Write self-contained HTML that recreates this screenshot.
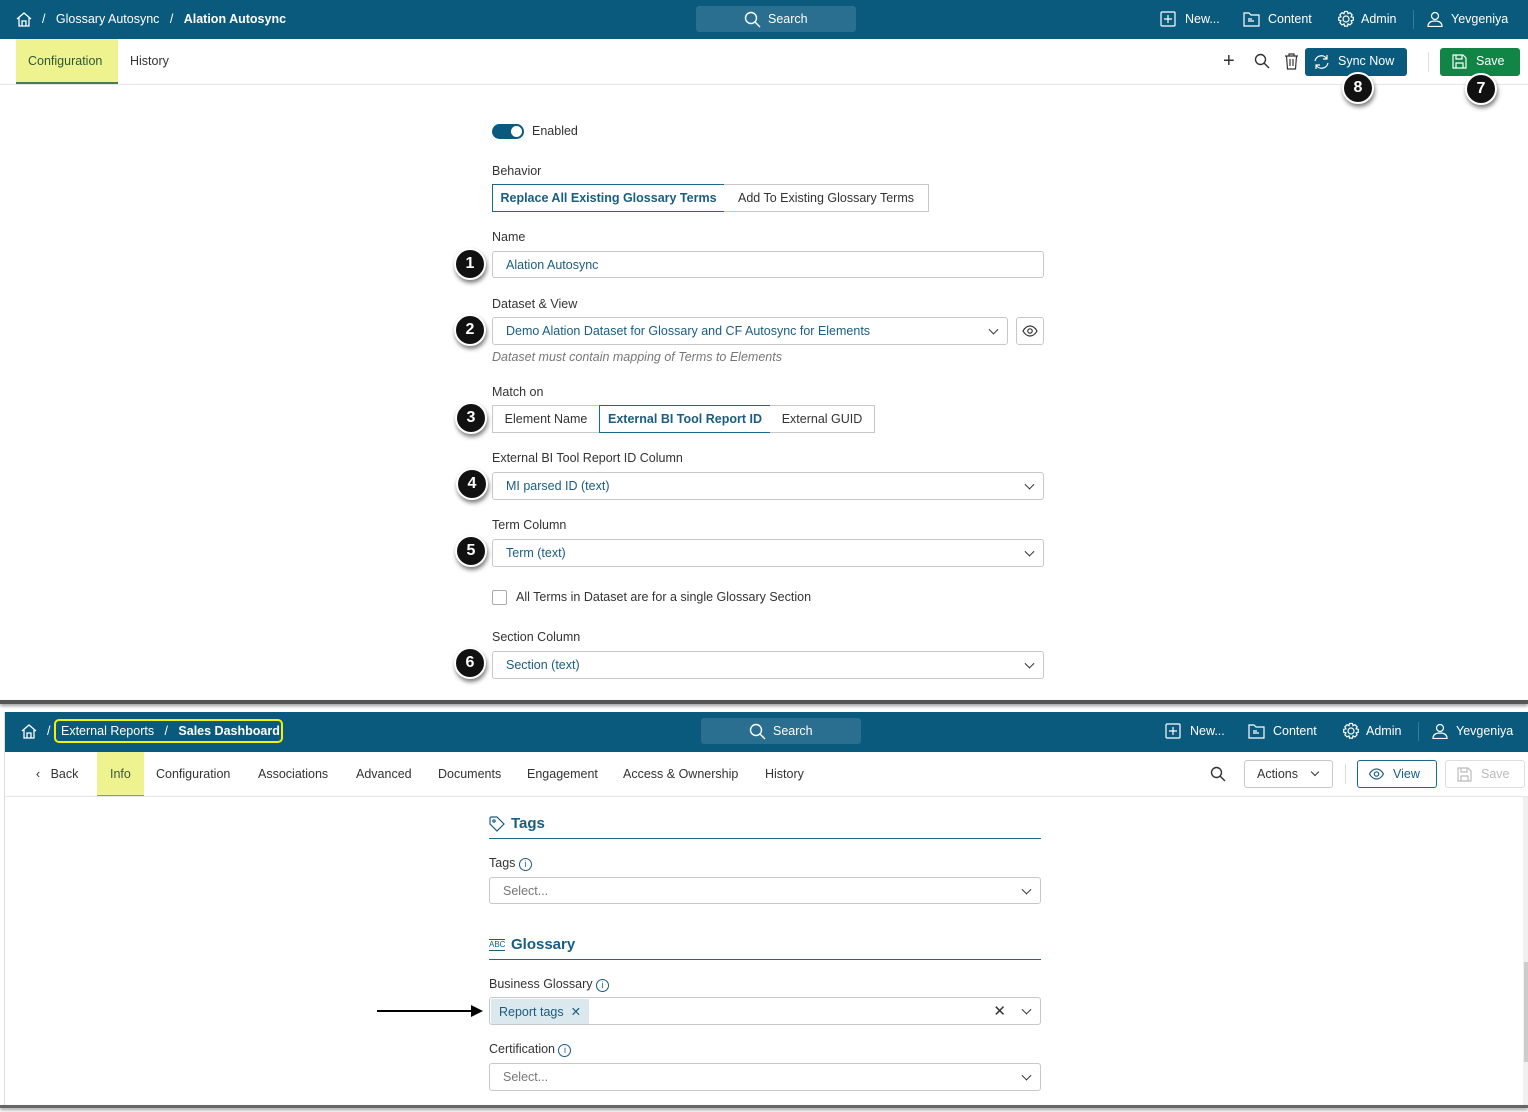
<!DOCTYPE html>
<html><head><meta charset="utf-8"><style>
*{box-sizing:border-box;margin:0;padding:0}
body{width:1528px;height:1112px;position:relative;background:#fff;font-family:"Liberation Sans",sans-serif;font-size:12.5px;color:#333;overflow:hidden}
.a{position:absolute}
.hdr{background:#0a5a7e;color:#fff}
.inp{position:absolute;border:1px solid #c8c8c8;border-radius:3px;background:#fff;color:#1a5d80;padding-left:13px;display:flex;align-items:center}
.lbl{position:absolute;color:#333;font-size:12.5px}
.badge{position:absolute;width:32px;height:32px;border-radius:50%;background:#111;color:#fff;font-weight:bold;font-size:16px;display:flex;align-items:center;justify-content:center;border:2px solid #fff;box-shadow:1px 3px 4px rgba(0,0,0,.5)}
.chev{position:absolute;right:10px;top:50%;width:7px;height:7px;border-right:1.3px solid #333;border-bottom:1.3px solid #333;transform:translateY(-70%) rotate(45deg)}
.seg{position:absolute;border:1px solid #c8c8c8;display:flex;align-items:center;justify-content:center;color:#333;background:#fff}
.seg.on{border-color:#1a6a90;color:#1a5d80;font-weight:bold}
.nav span{position:absolute;top:0;line-height:39px;color:#fff}
svg{position:absolute}
</style></head><body>
<!-- TOP -->
<div class="a hdr" style="left:0;top:0;width:1528px;height:39px">
<svg style="left:15px;top:11px" width="18" height="17" viewBox="0 0 18 17" fill="none" stroke="#fff" stroke-width="1.3"><path d="M2 8L9 2l7 6M4 7v8h10V7M7 15v-5h4v5"/></svg>
<div class="a" style="left:42px;top:12px">/&nbsp;&nbsp;&nbsp;Glossary Autosync&nbsp;&nbsp;&nbsp;/&nbsp;&nbsp;&nbsp;<b>Alation Autosync</b></div>
<div class="a" style="left:696px;top:6px;width:160px;height:26px;background:#2a6f8f;border-radius:3px"></div>
<svg style="left:744px;top:11px" width="17" height="17" viewBox="0 0 17 17" fill="none" stroke="#fff" stroke-width="1.4"><circle cx="7" cy="7" r="5.5"/><path d="M11 11l5 5"/></svg>
<div class="a" style="left:768px;top:12px">Search</div>
<svg style="left:1160px;top:11px" width="16" height="16" viewBox="0 0 16 16" fill="none" stroke="#fff" stroke-width="1.2"><rect x="1" y="1" width="14" height="14" rx="1"/><path d="M8 4v8M4 8h8"/></svg>
<div class="a" style="left:1185px;top:12px">New...</div>
<svg style="left:1243px;top:11px" width="17" height="16" viewBox="0 0 17 16" fill="none" stroke="#fff" stroke-width="1.2"><path d="M1 2h5l2 2h8v11H1z M5 10h6M5 8h4"/></svg>
<div class="a" style="left:1268px;top:12px">Content</div>
<svg style="left:1337px;top:10px" width="18" height="18" viewBox="0 0 18 18" fill="none" stroke="#fff" stroke-width="1.2"><circle cx="9" cy="9" r="3"/><path d="M7.5 1.5h3l.5 2.2 2-1 2.1 2.1-1 2 2.2.5v3l-2.2.5 1 2-2.1 2.1-2-1-.5 2.2h-3l-.5-2.2-2 1-2.1-2.1 1-2-2.2-.5v-3l2.2-.5-1-2 2.1-2.1 2 1z"/></svg>
<div class="a" style="left:1361px;top:12px">Admin</div>
<div class="a" style="left:1413px;top:10px;width:1px;height:19px;background:#3c7a98"></div>
<svg style="left:1427px;top:11px" width="16" height="16" viewBox="0 0 16 16" fill="none" stroke="#fff" stroke-width="1.2"><circle cx="8" cy="5" r="3.5"/><path d="M1 15.5c0-4 3-5.5 7-5.5s7 1.5 7 5.5z"/></svg>
<div class="a" style="left:1451px;top:12px">Yevgeniya</div>
</div>
<div class="a" style="left:16px;top:39px;width:102px;height:45px;background:#eef38f;border-bottom:2px solid #4a7a55"></div>
<div class="a" style="left:28px;top:54px;color:#2a5a3a">Configuration</div>
<div class="a" style="left:130px;top:54px">History</div>
<div class="a" style="left:0;top:84px;width:1528px;height:1px;background:#e6e6e6"></div>
<div class="a" style="left:1223px;top:50px;font-size:20px;color:#333">+</div>
<svg style="left:1254px;top:53px" width="16" height="16" viewBox="0 0 16 16" fill="none" stroke="#333" stroke-width="1.4"><circle cx="6.5" cy="6.5" r="5"/><path d="M10 10l5 5"/></svg>
<svg style="left:1284px;top:52px" width="15" height="18" viewBox="0 0 15 18" fill="none" stroke="#333" stroke-width="1.2"><path d="M1 4h13M5 4V2h5v2M2.5 4l1 13h8l1-13M6 7v7M9 7v7"/></svg>
<div class="a" style="left:1305px;top:48px;width:102px;height:28px;background:#0a5a7e;border-radius:3px"></div>
<svg style="left:1313px;top:54px" width="17" height="16" viewBox="0 0 17 16" fill="none" stroke="#fff" stroke-width="1.2"><path d="M2 7a6.5 6.5 0 0 1 12-2M15 9a6.5 6.5 0 0 1-12 2M14 1v4h-4M3 15v-4h4"/></svg>
<div class="a" style="left:1338px;top:54px;color:#fff">Sync Now</div>
<div class="a" style="left:1428px;top:52px;width:1px;height:20px;background:#ddd"></div>
<div class="a" style="left:1440px;top:48px;width:80px;height:28px;background:#108546;border-radius:3px"></div>
<svg style="left:1452px;top:54px" width="15" height="15" viewBox="0 0 15 15" fill="none" stroke="#fff" stroke-width="1.2"><path d="M1 1h10l3 3v10H1zM4 1v4h6V1M4 14V9h7v5"/></svg>
<div class="a" style="left:1476px;top:54px;color:#fff">Save</div>
<div class="badge" style="left:1342px;top:72px">8</div>
<div class="badge" style="left:1465px;top:73px">7</div>

<div class="a" style="left:492px;top:124px;width:32px;height:15px;border-radius:8px;background:#0a5a7e"></div>
<div class="a" style="left:511px;top:126px;width:11px;height:11px;border-radius:50%;background:#fff"></div>
<div class="a" style="left:532px;top:124px">Enabled</div>
<div class="lbl" style="left:492px;top:164px">Behavior</div>
<div class="seg on" style="left:492px;top:184px;width:233px;height:28px">Replace All Existing Glossary Terms</div>
<div class="seg" style="left:724px;top:184px;width:205px;height:28px;border-left:none">Add To Existing Glossary Terms</div>
<div class="lbl" style="left:492px;top:230px">Name</div>
<div class="inp" style="left:492px;top:251px;width:552px;height:27px">Alation Autosync</div>
<div class="badge" style="left:454px;top:248px">1</div>
<div class="lbl" style="left:492px;top:297px">Dataset &amp; View</div>
<div class="inp" style="left:492px;top:317px;width:516px;height:28px">Demo Alation Dataset for Glossary and CF Autosync for Elements<i class="chev"></i></div>
<div class="a" style="left:1016px;top:317px;width:28px;height:28px;border:1px solid #c8c8c8;border-radius:3px"></div>
<svg style="left:1022px;top:324px" width="16" height="14" viewBox="0 0 16 14" fill="none" stroke="#333" stroke-width="1.2"><path d="M1 7c2-3.5 4.5-5 7-5s5 1.5 7 5c-2 3.5-4.5 5-7 5s-5-1.5-7-5z"/><circle cx="8" cy="7" r="2.2"/></svg>
<div class="badge" style="left:454px;top:314px">2</div>
<div class="a" style="left:492px;top:350px;color:#777;font-style:italic">Dataset must contain mapping of Terms to Elements</div>
<div class="lbl" style="left:492px;top:385px">Match on</div>
<div class="seg" style="left:492px;top:405px;width:108px;height:28px">Element Name</div>
<div class="seg on" style="left:599px;top:405px;width:172px;height:28px">External BI Tool Report ID</div>
<div class="seg" style="left:770px;top:405px;width:105px;height:28px;border-left:none">External GUID</div>
<div class="badge" style="left:455px;top:402px">3</div>
<div class="lbl" style="left:492px;top:451px">External BI Tool Report ID Column</div>
<div class="inp" style="left:492px;top:472px;width:552px;height:28px">MI parsed ID (text)<i class="chev"></i></div>
<div class="badge" style="left:456px;top:468px">4</div>
<div class="lbl" style="left:492px;top:518px">Term Column</div>
<div class="inp" style="left:492px;top:539px;width:552px;height:28px">Term (text)<i class="chev"></i></div>
<div class="badge" style="left:455px;top:535px">5</div>
<div class="a" style="left:492px;top:590px;width:15px;height:15px;border:1px solid #aaa;border-radius:2px"></div>
<div class="a" style="left:516px;top:590px">All Terms in Dataset are for a single Glossary Section</div>
<div class="lbl" style="left:492px;top:630px">Section Column</div>
<div class="inp" style="left:492px;top:651px;width:552px;height:28px">Section (text)<i class="chev"></i></div>
<div class="badge" style="left:454px;top:647px">6</div>

<div class="a" style="left:0;top:700px;width:1528px;height:4px;background:#555;box-shadow:0 2px 3px rgba(0,0,0,.4)"></div>

<!-- BOTTOM -->
<div class="a" style="left:4px;top:712px;width:1524px;height:394px;border-left:1px solid #ddd">
<div class="a hdr" style="left:0;top:0;width:1524px;height:40px">
<svg style="left:15px;top:11px" width="18" height="17" viewBox="0 0 18 17" fill="none" stroke="#fff" stroke-width="1.3"><path d="M2 8L9 2l7 6M4 7v8h10V7M7 15v-5h4v5"/></svg>
<div class="a" style="left:42px;top:12px">/</div>
<div class="a" style="left:49px;top:7px;width:229px;height:24px;border:2px solid #f2f200;border-radius:5px"></div>
<div class="a" style="left:56px;top:12px">External Reports&nbsp;&nbsp;&nbsp;/&nbsp;&nbsp;&nbsp;<b>Sales Dashboard</b></div>
<div class="a" style="left:696px;top:6px;width:160px;height:26px;background:#2a6f8f;border-radius:3px"></div>
<svg style="left:744px;top:11px" width="17" height="17" viewBox="0 0 17 17" fill="none" stroke="#fff" stroke-width="1.4"><circle cx="7" cy="7" r="5.5"/><path d="M11 11l5 5"/></svg>
<div class="a" style="left:768px;top:12px">Search</div>
<svg style="left:1160px;top:11px" width="16" height="16" viewBox="0 0 16 16" fill="none" stroke="#fff" stroke-width="1.2"><rect x="1" y="1" width="14" height="14" rx="1"/><path d="M8 4v8M4 8h8"/></svg>
<div class="a" style="left:1185px;top:12px">New...</div>
<svg style="left:1243px;top:11px" width="17" height="16" viewBox="0 0 17 16" fill="none" stroke="#fff" stroke-width="1.2"><path d="M1 2h5l2 2h8v11H1z M5 10h6M5 8h4"/></svg>
<div class="a" style="left:1268px;top:12px">Content</div>
<svg style="left:1337px;top:10px" width="18" height="18" viewBox="0 0 18 18" fill="none" stroke="#fff" stroke-width="1.2"><circle cx="9" cy="9" r="3"/><path d="M7.5 1.5h3l.5 2.2 2-1 2.1 2.1-1 2 2.2.5v3l-2.2.5 1 2-2.1 2.1-2-1-.5 2.2h-3l-.5-2.2-2 1-2.1-2.1 1-2-2.2-.5v-3l2.2-.5-1-2 2.1-2.1 2 1z"/></svg>
<div class="a" style="left:1361px;top:12px">Admin</div>
<div class="a" style="left:1413px;top:10px;width:1px;height:19px;background:#3c7a98"></div>
<svg style="left:1427px;top:11px" width="16" height="16" viewBox="0 0 16 16" fill="none" stroke="#fff" stroke-width="1.2"><circle cx="8" cy="5" r="3.5"/><path d="M1 15.5c0-4 3-5.5 7-5.5s7 1.5 7 5.5z"/></svg>
<div class="a" style="left:1451px;top:12px">Yevgeniya</div>
</div>
<div class="a" style="left:92px;top:40px;width:47px;height:45px;background:#eef38f;border-bottom:2px solid #8aa070"></div>
<div class="a" style="left:0;top:84px;width:1524px;height:1px;background:#e6e6e6"></div>
<div class="a" style="left:31px;top:55px;color:#333">‹&nbsp;&nbsp;&nbsp;Back</div>
<div class="a" style="left:105px;top:55px;color:#3a5a3a">Info</div>
<div class="a" style="left:151px;top:55px">Configuration</div>
<div class="a" style="left:253px;top:55px">Associations</div>
<div class="a" style="left:351px;top:55px">Advanced</div>
<div class="a" style="left:433px;top:55px">Documents</div>
<div class="a" style="left:522px;top:55px">Engagement</div>
<div class="a" style="left:618px;top:55px">Access &amp; Ownership</div>
<div class="a" style="left:760px;top:55px">History</div>
<svg style="left:1205px;top:54px" width="16" height="16" viewBox="0 0 16 16" fill="none" stroke="#333" stroke-width="1.4"><circle cx="6.5" cy="6.5" r="5"/><path d="M10 10l5 5"/></svg>
<div class="a" style="left:1239px;top:48px;width:89px;height:28px;border:1px solid #c8c8c8;border-radius:3px"></div>
<div class="a" style="left:1252px;top:55px">Actions</div>
<i class="a" style="left:1307px;top:57px;width:6px;height:6px;border-right:1.3px solid #333;border-bottom:1.3px solid #333;transform:rotate(45deg)"></i>
<div class="a" style="left:1340px;top:52px;width:1px;height:20px;background:#ddd"></div>
<div class="a" style="left:1352px;top:48px;width:80px;height:28px;border:1px solid #1a6a90;border-radius:3px"></div>
<svg style="left:1363px;top:55px" width="17" height="14" viewBox="0 0 16 14" fill="none" stroke="#1a5d80" stroke-width="1.2"><path d="M1 7c2-3.5 4.5-5 7-5s5 1.5 7 5c-2 3.5-4.5 5-7 5s-5-1.5-7-5z"/><circle cx="8" cy="7" r="2.2"/></svg>
<div class="a" style="left:1388px;top:55px;color:#1a5d80">View</div>
<div class="a" style="left:1440px;top:48px;width:80px;height:28px;border:1px solid #ddd;border-radius:3px"></div>
<svg style="left:1452px;top:55px" width="15" height="15" viewBox="0 0 15 15" fill="none" stroke="#bbb" stroke-width="1.2"><path d="M1 1h10l3 3v10H1zM4 1v4h6V1M4 14V9h7v5"/></svg>
<div class="a" style="left:1476px;top:55px;color:#bbb">Save</div>
<div class="a" style="left:1518px;top:85px;width:6px;height:309px;background:#f0f0f0"></div>
<div class="a" style="left:1519px;top:250px;width:4px;height:100px;background:#ccc"></div>

<svg style="left:484px;top:104px" width="16" height="16" viewBox="0 0 16 16" fill="none" stroke="#1a5d80" stroke-width="1.2"><path d="M1 2v6l7 7 7-7-7-7H2z"/><circle cx="5" cy="5" r="1.2"/></svg>
<div class="a" style="left:506px;top:103px;font-size:15px;font-weight:bold;color:#1a5d80">Tags</div>
<div class="a" style="left:484px;top:126px;width:552px;height:1px;background:#1a6a90"></div>
<div class="a" style="left:484px;top:144px">Tags <span style="display:inline-block;width:13px;height:13px;border:1px solid #1a5d80;border-radius:50%;font-size:9px;text-align:center;line-height:11px;color:#1a5d80">i</span></div>
<div class="inp" style="left:484px;top:165px;width:552px;height:27px;color:#777">Select...<i class="chev"></i></div>
<div class="a" style="left:484px;top:227px;font-size:8px;color:#1a5d80;border-top:1px solid #1a5d80;border-bottom:1px solid #1a5d80;line-height:10px">ABC</div>
<div class="a" style="left:506px;top:224px;font-size:15px;font-weight:bold;color:#1a5d80">Glossary</div>
<div class="a" style="left:484px;top:247px;width:552px;height:1px;background:#1a6a90"></div>
<div class="a" style="left:484px;top:265px">Business Glossary <span style="display:inline-block;width:13px;height:13px;border:1px solid #1a5d80;border-radius:50%;font-size:9px;text-align:center;line-height:11px;color:#1a5d80">i</span></div>
<div class="inp" style="left:484px;top:285px;width:552px;height:28px;padding-left:1px"><span style="background:#dbe8ee;color:#1a5d80;padding:5px 8px;margin-top:0">Report tags&nbsp;&nbsp;✕</span><span style="position:absolute;right:34px;color:#333;font-size:15px">✕</span><i class="chev"></i></div>
<div class="a" style="left:372px;top:298px;width:100px;height:2px;background:#000"></div>
<div class="a" style="left:466px;top:293px;width:0;height:0;border-left:12px solid #000;border-top:6px solid transparent;border-bottom:6px solid transparent"></div>
<div class="a" style="left:484px;top:330px">Certification <span style="display:inline-block;width:13px;height:13px;border:1px solid #1a5d80;border-radius:50%;font-size:9px;text-align:center;line-height:11px;color:#1a5d80">i</span></div>
<div class="inp" style="left:484px;top:351px;width:552px;height:28px;color:#777">Select...<i class="chev"></i></div>
</div>
<div class="a" style="left:0;top:1105px;width:1528px;height:3px;background:#666;box-shadow:0 2px 3px rgba(0,0,0,.4)"></div>
</body></html>
